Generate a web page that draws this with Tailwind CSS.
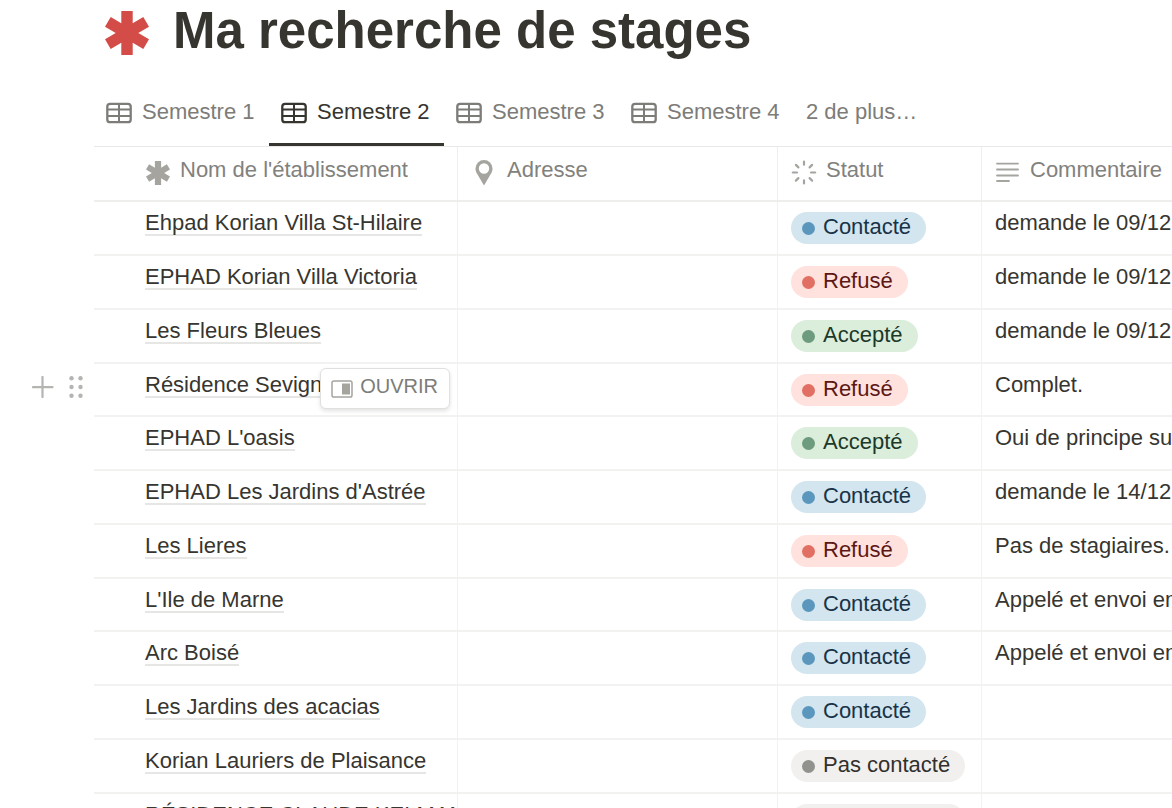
<!DOCTYPE html>
<html lang="fr">
<head>
<meta charset="utf-8">
<title>Ma recherche de stages</title>
<script src="https://cdn.jsdelivr.net/npm/@tailwindcss/browser@4"></script>
</head>
<body class="h-screen overflow-hidden bg-white pl-[94px] font-['Liberation_Sans',Arial,sans-serif] text-[22px] text-[#37352f]">
<svg class="hidden">
  <symbol id="grid" viewBox="0 0 26 22"><g fill="none" stroke="currentColor"><rect x="1.3" y="1.8" width="23.4" height="18.4" rx="2.8" stroke-width="2.3"/><path d="M1 7.6h24M1 14h24M13 2v18" stroke-width="2"/></g></symbol>
  <symbol id="star" viewBox="0 0 44 44"><path fill="currentColor" d="M16.300 0h11.400v12.200l10.600-6.100 5.700 9.700-10.700 6.200 10.700 6.200-5.700 9.700-10.600-6.100V44H16.300V31.800L5.700 37.900 0 28.200 10.700 22 0 15.800 5.700 6.100l10.600 6.100z"/></symbol>
</svg>

<header class="flex h-[78px] items-start gap-6 pl-[11px]">
  <svg class="mt-[11px] size-11 shrink-0 text-[#d44c47]"><use href="#star"/></svg>
  <h1 class="text-[51px] leading-[62px] font-bold whitespace-nowrap">Ma recherche de stages</h1>
</header>

<nav class="flex h-[68px] items-stretch text-[#7d7c78]" aria-label="Vues">
  <button class="flex min-w-[175px] items-center gap-[10px] border-b-3 border-transparent px-3 pt-[2px] whitespace-nowrap"><svg class="mt-[3px] h-[22px] w-[26px]"><use href="#grid"/></svg>Semestre 1</button>
  <button class="flex min-w-[175px] items-center gap-[10px] border-b-3 border-[#37352f] px-3 pt-[2px] whitespace-nowrap text-[#37352f]" aria-current="page"><svg class="mt-[3px] h-[22px] w-[26px]"><use href="#grid"/></svg>Semestre 2</button>
  <button class="flex min-w-[175px] items-center gap-[10px] border-b-3 border-transparent px-3 pt-[2px] whitespace-nowrap"><svg class="mt-[3px] h-[22px] w-[26px]"><use href="#grid"/></svg>Semestre 3</button>
  <button class="flex min-w-[175px] items-center gap-[10px] border-b-3 border-transparent px-3 pt-[2px] whitespace-nowrap"><svg class="mt-[3px] h-[22px] w-[26px]"><use href="#grid"/></svg>Semestre 4</button>
  <button class="border-b-3 border-transparent px-3 pt-[2px] whitespace-nowrap">2 de plus…</button>
</nav>

<table class="w-full table-fixed border-separate border-spacing-0 border-t border-[#e9e9e7] [&_td]:overflow-hidden [&_td]:border-b-2 [&_td]:border-[#f2f2f1] [&_td]:pt-[9px] [&_td]:align-top [&_td]:leading-[23px] [&_td]:whitespace-nowrap [&_td:not(:last-child)]:border-r [&_th]:border-b-2 [&_th]:border-[#eeeeec] [&_th]:pt-[10px] [&_th]:align-top [&_th]:font-normal [&_th]:text-[#82817d] [&_th:not(:last-child)]:border-r">
  <colgroup><col class="w-[364px]"><col class="w-[320px]"><col class="w-[204px]"><col></colgroup>
  <thead>
    <tr class="h-[55px]">
      <th scope="col" class="pl-[52px]"><div class="flex items-start gap-[10px] leading-[26px]"><svg class="mt-1 size-6 text-[#a5a49f]"><use href="#star"/></svg>Nom de l'établissement</div></th>
      <th scope="col" class="pl-[17px]"><div class="flex items-start gap-[14px] leading-[26px]"><svg class="mt-[3px] h-[26px] w-[18px] text-[#a5a49f]" viewBox="0 0 18 26"><path fill="currentColor" fill-rule="evenodd" d="M9 0a8.500 8.500 0 0 1 8.500 8.500c0 1.700-.4 2.900-1 4.200L9 25.500 1.500 12.700c-.6-1.300-1-2.500-1-4.200A8.500 8.500 0 0 1 9 0zm0 3.300a5.200 5.200 0 1 0 0 10.400A5.200 5.200 0 0 0 9 3.300z"/></svg>Adresse</div></th>
      <th scope="col" class="pl-[13px]"><div class="flex items-start gap-[9px] leading-[26px]"><svg class="mt-[3px] size-[26px] text-[#a5a49f]" viewBox="0 0 26 26"><path fill="none" stroke="currentColor" stroke-width="2.200" stroke-linecap="round" d="M13 1.500v3.200M13 20.300v3.200M1.800 12.500H6M20 12.500h4.200M4.900 4.900l2.500 2.500M18.600 18.100l2.500 2.500M4.900 20.600l2.500-2.500M18.600 7.400l2.500-2.500"/></svg>Statut</div></th>
      <th scope="col" class="pl-[13px]"><div class="flex items-start gap-[11px] leading-[26px]"><svg class="mt-1 h-[22px] w-6 shrink-0 text-[#a5a49f]" viewBox="0 0 24 22"><path fill="none" stroke="currentColor" stroke-width="1.800" stroke-linecap="round" d="M2 2.600h21M2 8.500h21M2 14.500h21M2 20h12"/></svg>Commentaire</div></th>
    </tr>
  </thead>
  <tbody id="rows"></tbody>
</table>

<template id="row">
  <tr class="h-[54px] [&:nth-child(4n)]:h-[53px]">
    <td class="pl-[51px]"><a href="#" class="inline-block border-b-2 border-[#e6e6e4]"></a></td>
    <td></td>
    <td class="pl-[13px]"><span class="mt-px flex h-8 w-max items-start gap-2 rounded-full pr-[15px] pl-[11px] leading-[29px]"><i class="mt-[10px] size-[13px] rounded-full"></i><span></span></span></td>
    <td class="pl-[13px]"></td>
  </tr>
</template>

<template id="hover">
  <div class="absolute top-[12px] left-[-62px] flex items-center gap-[15px] text-[#b5b4b1]">
    <button aria-label="Ajouter une ligne"><svg class="block size-[22px]" viewBox="0 0 22 22"><path fill="none" stroke="currentColor" stroke-width="2.200" stroke-linecap="round" d="M10.500 1v20M1 11.200h19.500"/></svg></button>
    <button aria-label="Déplacer la ligne"><svg class="block h-[22px] w-[14px]" viewBox="0 0 14 22" fill="currentColor"><circle cx="2.500" cy="2.200" r="2.200"/><circle cx="11.500" cy="2.200" r="2.200"/><circle cx="2.500" cy="11" r="2.200"/><circle cx="11.500" cy="11" r="2.200"/><circle cx="2.500" cy="19.800" r="2.200"/><circle cx="11.500" cy="19.800" r="2.200"/></svg></button>
  </div>
  <button class="absolute top-1 right-[7px] flex h-[41px] items-start gap-[7px] rounded-md border border-[#e0e0de] bg-white pr-[11px] pl-[10px] text-[20px] leading-[35px] text-[#7d7c78] shadow-[0_2px_4px_rgba(15,15,15,0.12)]"><svg class="mt-[11px] h-[18px] w-[22px] text-[#a5a49f]" viewBox="0 0 22 18"><rect x="1" y="1" width="20" height="16" rx="1.800" fill="none" stroke="currentColor" stroke-width="1.500"/><path fill="currentColor" d="M11 3.500h8v11h-8z"/></svg>OUVRIR</button>
</template>

<script>
const statuses = {
  'Contacté': ['bg-[#d3e5ef]', 'text-[#183347]', 'bg-[#5b97bd]'],
  'Refusé': ['bg-[#ffe2dd]', 'text-[#5d1715]', 'bg-[#e16f64]'],
  'Accepté': ['bg-[#dbeddb]', 'text-[#1c3829]', 'bg-[#6c9b7d]'],
  'Pas contacté': ['bg-[#f1f0ef]', 'text-[#32302c]', 'bg-[#91918e]']
};
const rows = [
  ['Ehpad Korian Villa St-Hilaire', 'Contacté', 'demande le 09/12'],
  ['EPHAD Korian Villa Victoria', 'Refusé', 'demande le 09/12'],
  ['Les Fleurs Bleues', 'Accepté', 'demande le 09/12'],
  ['Résidence Sevigné', 'Refusé', 'Complet.'],
  ["EPHAD L'oasis", 'Accepté', 'Oui de principe sur'],
  ["EPHAD Les Jardins d'Astrée", 'Contacté', 'demande le 14/12'],
  ['Les Lieres', 'Refusé', 'Pas de stagiaires.'],
  ["L'Ile de Marne", 'Contacté', 'Appelé et envoi email'],
  ['Arc Boisé', 'Contacté', 'Appelé et envoi email'],
  ['Les Jardins des acacias', 'Contacté', ''],
  ['Korian Lauriers de Plaisance', 'Pas contacté', ''],
  ['RÉSIDENCE CLAUDE KELMAN', 'Pas contacté', '']
];
rows.forEach(([name, status, note], i) => {
  const row = document.getElementById('row').content.cloneNode(true);
  const cells = row.querySelectorAll('td');
  const [fill, ink, dot] = statuses[status];
  cells[0].firstChild.textContent = name;
  cells[2].firstChild.classList.add(fill, ink);
  cells[2].querySelector('i').classList.add(dot);
  cells[2].querySelector('span span').textContent = status;
  cells[3].textContent = note;
  if (i === 3) {
    cells[0].classList.add('relative', 'overflow-visible!');
    cells[0].append(document.getElementById('hover').content.cloneNode(true));
  }
  document.getElementById('rows').append(row);
});
</script>
</body>
</html>
